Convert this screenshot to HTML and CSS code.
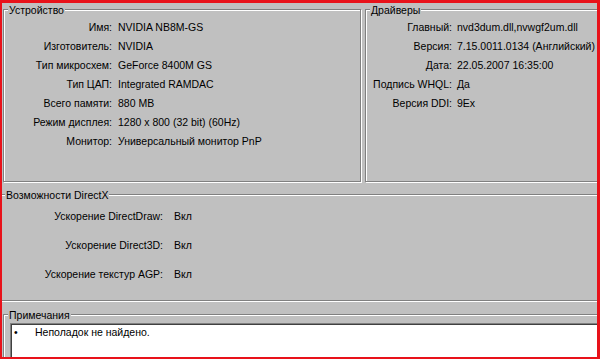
FILE: index.html
```html
<!DOCTYPE html>
<html lang="ru">
<head>
<meta charset="utf-8">
<title>DirectX</title>
<link rel="stylesheet" href="styles.css">
</head>
<body>
<div class="frame">
  <div class="top">
    <section class="group device">
      <div class="title">Устройство</div>
      <div class="rows dev-rows">
        <div class="lbl">Имя:</div><div class="val">NVIDIA NB8M-GS</div>
        <div class="lbl">Изготовитель:</div><div class="val">NVIDIA</div>
        <div class="lbl">Тип микросхем:</div><div class="val">GeForce 8400M GS</div>
        <div class="lbl">Тип ЦАП:</div><div class="val">Integrated RAMDAC</div>
        <div class="lbl">Всего памяти:</div><div class="val">880 MB</div>
        <div class="lbl">Режим дисплея:</div><div class="val">1280 x 800 (32 bit) (60Hz)</div>
        <div class="lbl">Монитор:</div><div class="val">Универсальный монитор PnP</div>
      </div>
    </section>
    <section class="group drivers">
      <div class="title">Драйверы</div>
      <div class="rows drv-rows">
        <div class="lbl">Главный:</div><div class="val">nvd3dum.dll,nvwgf2um.dll</div>
        <div class="lbl">Версия:</div><div class="val">7.15.0011.0134 (Английский)</div>
        <div class="lbl">Дата:</div><div class="val">22.05.2007 16:35:00</div>
        <div class="lbl">Подпись WHQL:</div><div class="val">Да</div>
        <div class="lbl">Версия DDI:</div><div class="val">9Ex</div>
      </div>
    </section>
  </div>
  <section class="group dx">
    <div class="title">Возможности DirectX</div>
    <div class="rows dx-rows">
      <div class="lbl">Ускорение DirectDraw:</div><div class="val">Вкл</div>
      <div class="lbl">Ускорение Direct3D:</div><div class="val">Вкл</div>
      <div class="lbl">Ускорение текстур AGP:</div><div class="val">Вкл</div>
    </div>
  </section>
  <section class="group notes">
    <div class="title">Примечания</div>
    <div class="notebox">
      <div class="note"><span class="bullet">•</span><span>Неполадок не найдено.</span></div>
    </div>
  </section>
</div>
</body>
</html>
```
FILE: styles.css
```css
html, body {
  margin: 0;
  padding: 0;
  background: #c0c0c0;
}
.frame {
  box-sizing: border-box;
  width: 600px;
  height: 359px;
  border-style: solid;
  border-color: #e8121a;
  border-width: 3px 3px 2px 2px;
  background: #c0c0c0;
  overflow: hidden;
  display: flex;
  flex-direction: column;
  font-family: "Liberation Sans", Arial, sans-serif;
  font-size: 10.5px;
  color: #000;
}
.top {
  display: flex;
  flex-shrink: 0;
  gap: 4px;
  margin: 6px -6px 0 1px;
}
.group {
  position: relative;
  border: 1px solid #808080;
  box-shadow: inset 1px 1px 0 #fff, 1px 1px 0 #fff;
}
.title {
  position: absolute;
  top: -6px;
  left: 4px;
  padding: 0 1px;
  background: #c0c0c0;
  line-height: 13px;
  white-space: nowrap;
}
.device {
  width: 356px;
  height: 171px;
}
.drivers {
  flex: 1;
  height: 171px;
}
.rows {
  display: grid;
  grid-auto-rows: 19px;
  align-items: center;
  white-space: nowrap;
}
.lbl { text-align: right; }
.dev-rows {
  grid-template-columns: 108px 1fr;
  column-gap: 6px;
  padding-top: 7px;
}
.drv-rows {
  grid-template-columns: 86px 1fr;
  column-gap: 5px;
  padding-top: 7px;
}
.dx {
  flex-shrink: 0;
  margin: 12px -6px 0 -2px;
  height: 105px;
}
.dx-rows {
  grid-template-columns: 162px 1fr;
  column-gap: 11px;
  row-gap: 10px;
  padding-top: 11px;
}
.notes {
  flex-shrink: 0;
  height: 60px;
  margin: 13px -6px 0 1px;
}
.notebox {
  margin: 8px 0 0 6px;
  height: 60px;
  background: #fff;
  border: 1px solid;
  border-color: #808080 #fff #fff #808080;
  box-shadow: inset 1px 1px 0 #404040;
}
.note {
  display: flex;
  line-height: 13px;
  padding: 2px 0 0 3px;
}
.bullet {
  width: 21px;
}
```
